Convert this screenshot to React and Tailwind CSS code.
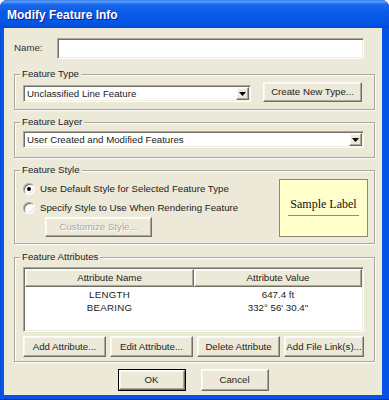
const sunken =
  "border border-t-[#ACA899] border-l-[#ACA899] border-b-white border-r-white shadow-[inset_1px_1px_0_#716F64,inset_-1px_-1px_0_#F1EFE2]";
const raised =
  "border border-t-white border-l-white border-b-[#716F64] border-r-[#716F64] shadow-[inset_-1px_-1px_0_#ACA899,inset_1px_1px_0_#F8F7F0]";

function Group({ label, className, children }) {
  return (
    <div
      className={
        "relative box-border w-[361px] border border-[#ACA899] shadow-[inset_1px_1px_0_#ffffff,1px_1px_0_#ffffff] " +
        className
      }
    >
      <span className="absolute left-[5px] -top-[7px] bg-[#ECE9D8] px-[2px] leading-[12px]">
        {label}
      </span>
      {children}
    </div>
  );
}

function Combo({ value, className }) {
  return (
    <div className={"box-border h-[17px] bg-white flex items-center p-[1px] " + sunken + " " + className}>
      <span className="flex-1 pl-[2px] leading-[12px] whitespace-nowrap overflow-hidden">{value}</span>
      <div className={"box-border w-[13px] h-full bg-[#ECE9D8] flex items-center justify-center " + raised}>
        <svg width="7" height="4" viewBox="0 0 7 4">
          <path d="M0 0h7L3.5 4z" fill="#000" />
        </svg>
      </div>
    </div>
  );
}

function Button({ children, className, disabled }) {
  return (
    <div
      className={
        "box-border bg-[#ECE9D8] flex items-center justify-center leading-[12px] whitespace-nowrap " +
        raised +
        " " +
        (disabled ? "text-[#ACA899] [text-shadow:1px_1px_0_#ffffff] " : "") +
        className
      }
    >
      {children}
    </div>
  );
}

function Radio({ checked }) {
  return (
    <div className="box-border w-[12px] h-[12px] rounded-full bg-white border border-t-[#ACA899] border-l-[#ACA899] border-b-white border-r-white shadow-[inset_1px_1px_0_#716F64,inset_-1px_-1px_0_#E4E2D6] flex items-center justify-center">
      {checked && <div className="w-[4px] h-[4px] rounded-full bg-black" />}
    </div>
  );
}

export default function App() {
  return (
    <div className="w-[389px] h-[400px] bg-white font-['Liberation_Sans',Arial,sans-serif] text-[9.7px] text-[#1c1c1c]">
      <div className="w-full h-full flex flex-col rounded-t-[7px] overflow-hidden bg-[#0550E2]">
        <div className="h-[28px] flex items-center pl-[7px] pt-[1px] bg-[linear-gradient(to_bottom,#2E7BF0_0%,#5A9CFA_6%,#1B68EC_16%,#0A5CE8_40%,#0556E6_75%,#0350DE_92%,#0148CE_100%)]">
          <span className="text-white font-bold text-[12px] leading-[14px] [text-shadow:1px_1px_0_#0A1E8A]">
            Modify Feature Info
          </span>
        </div>
        <div className="flex-1 flex pl-[4px] pr-[7px] pb-[4px] bg-[linear-gradient(to_right,#0840C8_0px,#0A58EA_1px,#0553E4_4px)] border-b border-[#0030B0]">
          <div className="flex-1 bg-[#ECE9D8] flex flex-col pl-[10px] pt-[10px]">
            <div className="flex items-center h-[21px]">
              <span className="w-[43px] text-[#333]">Name:</span>
              <div className={"box-border w-[307px] h-[21px] bg-white " + sunken} />
            </div>

            <Group label="Feature Type" className="mt-[15px] h-[36px] flex items-start pt-[7px] pl-[8px]">
              <Combo value="Unclassified Line Feature" className="w-[228px] mt-[3px]" />
              <Button className="ml-[12px] w-[99px] h-[20px]">Create New Type...</Button>
            </Group>

            <Group label="Feature Layer" className="mt-[12px] h-[36px] flex items-start pt-[8px] pl-[8px]">
              <Combo value="User Created and Modified Features" className="w-[341px]" />
            </Group>

            <Group label="Feature Style" className="mt-[12px] h-[74px] flex justify-between pt-[8px] pl-[8px] pr-[6px]">
              <div className="flex flex-col">
                <div className="h-[19px] flex items-center gap-[5px]">
                  <Radio checked />
                  <span className="leading-[12px]">Use Default Style for Selected Feature Type</span>
                </div>
                <div className="h-[19px] flex items-center gap-[5px]">
                  <Radio />
                  <span className="leading-[12px]">Specify Style to Use When Rendering Feature</span>
                </div>
                <Button disabled className="ml-[22px] w-[107px] h-[20px]">
                  Customize Style...
                </Button>
              </div>
              <div className="box-border w-[89px] h-[58px] bg-[#FFFFCC] border border-[#8A887C] flex flex-col items-center pt-[17px]">
                <span className="font-['Liberation_Serif',serif] text-[12px] leading-[14px] text-[#111]">
                  Sample Label
                </span>
                <div className="w-[71px] h-[1px] bg-[#8C8C8C] mt-[4px]" />
              </div>
            </Group>

            <Group label="Feature Attributes" className="mt-[13px] h-[105px] flex flex-col pt-[9px] pl-[8px]">
              <div className={"box-border w-[341px] h-[65px] bg-white p-[1px] flex flex-col " + sunken}>
                <div className="flex h-[18px] shrink-0">
                  <div className={"box-border w-[169px] h-full bg-[#ECE9D8] flex items-center justify-center leading-[12px] " + raised}>
                    Attribute Name
                  </div>
                  <div className={"box-border flex-1 h-full bg-[#ECE9D8] flex items-center justify-center leading-[12px] " + raised}>
                    Attribute Value
                  </div>
                </div>
                <div className="flex flex-col pt-[1px]">
                  <div className="flex h-[13px] items-center leading-[12px]">
                    <span className="w-[169px] text-center tracking-[0.3px]">LENGTH</span>
                    <span className="flex-1 text-center">647.4 ft</span>
                  </div>
                  <div className="flex h-[13px] items-center leading-[12px]">
                    <span className="w-[169px] text-center tracking-[0.3px]">BEARING</span>
                    <span className="flex-1 text-center">332° 56' 30.4"</span>
                  </div>
                </div>
              </div>
              <div className="flex gap-[4px] mt-[4px]">
                <Button className="w-[83px] h-[21px]">Add Attribute...</Button>
                <Button className="w-[83px] h-[21px]">Edit Attribute...</Button>
                <Button className="w-[83px] h-[21px]">Delete Attribute</Button>
                <Button className="w-[80px] h-[21px]">Add File Link(s)...</Button>
              </div>
            </Group>

            <div className="mt-[7px] w-[361px] pr-[3px] flex justify-center gap-[15px]">
              <div className="box-border w-[68px] h-[22px] border border-black flex">
                <Button className="flex-1 h-full">OK</Button>
              </div>
              <Button className="w-[68px] h-[22px]">Cancel</Button>
            </div>
          </div>
        </div>
      </div>
    </div>
  );
}
